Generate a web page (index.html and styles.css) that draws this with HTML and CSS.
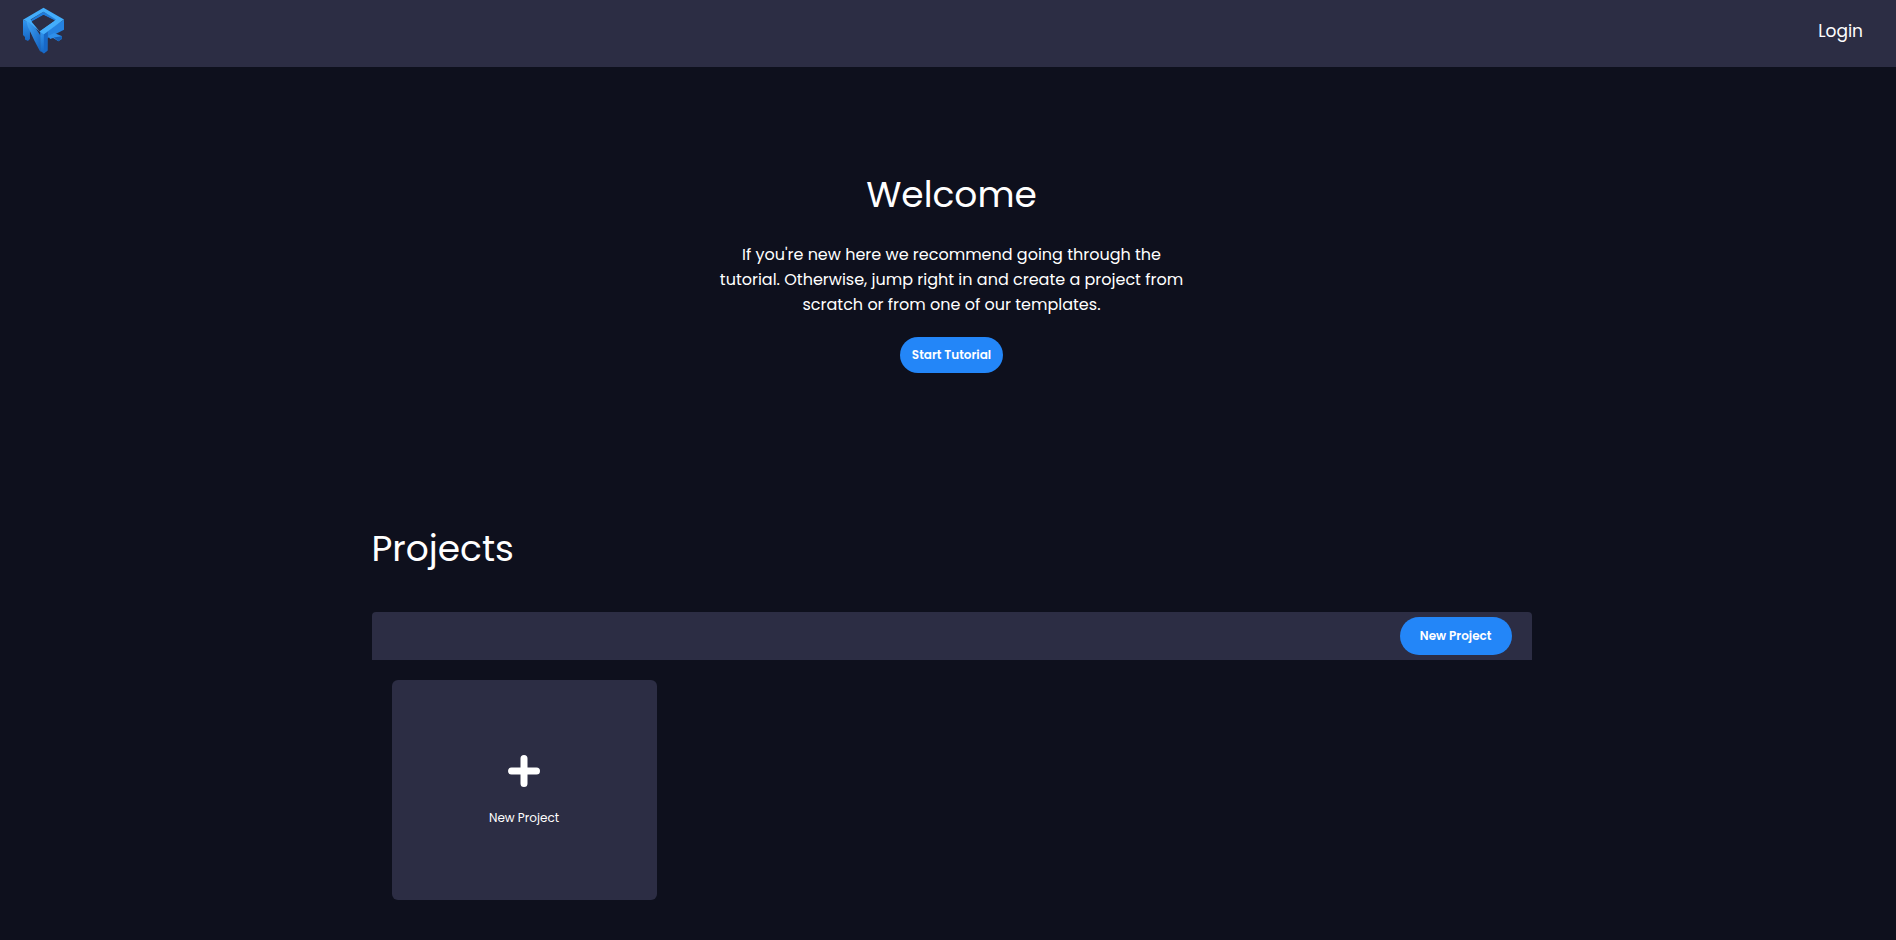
FILE: index.html
```html
<!DOCTYPE html>
<html lang="en">
<head>
<meta charset="utf-8">
<title>Projects</title>
<link rel="stylesheet" href="styles.css">
</head>
<body>
<header class="header">
  <a class="logo" href="#" aria-label="Home">
    <svg viewBox="66 22 130 144" width="43" height="48" aria-hidden="true">
      <defs>
        <linearGradient id="leg" x1="0" y1="0" x2="0" y2="1">
          <stop offset="0" stop-color="#3196f0"/>
          <stop offset="1" stop-color="#1666c4"/>
        </linearGradient>
        <linearGradient id="brace" x1="0" y1="0" x2="1" y2="1">
          <stop offset="0" stop-color="#43a9fa"/>
          <stop offset="1" stop-color="#125fbd"/>
        </linearGradient>
      </defs>
      <path fill="url(#leg)" d="M69 60L90 70V118L84 124L75 120V112L69 106Z"/>
      <path fill="#2c2d44" d="M91 98L108 134L91 126Z"/>
      <path fill="url(#brace)" d="M78 60L94 64L122 108V158L104 124L84 82Z"/>
      <path fill="#1f7bdb" d="M131 36L168 58V64L131 46L94 66V59Z"/>
      <path fill="#2582e0" d="M193 60V90L178 98L143 116V92Z"/>
      <path fill="#2e8fea" d="M145 109L163 100L186 109V118L176 125L160 115L151 118Z"/>
      <path fill="#145fb8" d="M162 114L186 110V118L176 125Z"/>
      <path fill="url(#leg)" d="M121 96L143 94V153L132 162L121 154Z"/>
      <path fill="#1768c8" d="M132 102L143 96V153L132 162Z"/>
      <path fill="#43adfb" fill-rule="evenodd" d="M131 24L193 59L132 104L120 96L88 68L69 60ZM131 36L92 59L120 93L168 59Z"/>
      <path fill="#2c2d44" d="M131 46L95 66L119 95L165 62Z"/>
    </svg>
  </a>
  <a class="login" href="#">Login</a>
</header>
<main class="page">
  <section class="welcome">
    <h1 class="title">Welcome</h1>
    <p class="intro">If you're new here we recommend going through the<br>tutorial. Otherwise, jump right in and create a project from<br>scratch or from one of our templates.</p>
    <button class="button button-tutorial" type="button">Start Tutorial</button>
  </section>
  <section class="projects">
    <h2 class="title">Projects</h2>
    <div class="toolbar">
      <button class="button button-new" type="button">New Project</button>
    </div>
    <div class="grid">
      <button class="card" type="button">
        <svg viewBox="0 0 32 32" width="32" height="32" aria-hidden="true">
          <path d="M16 3.5V28.5M3.5 16H28.5" stroke="#fff" stroke-width="7" stroke-linecap="round"/>
        </svg>
        <span>New Project</span>
      </button>
    </div>
  </section>
</main>
</body>
</html>
```
FILE: styles.css
```css
* { box-sizing: border-box; }

body {
  margin: 0;
  min-height: 100vh;
  background: #0e101d;
  color: #fff;
  font-family: Poppins, Inter, sans-serif;
  font-size: 16px;
}

.header {
  display: flex;
  align-items: flex-start;
  justify-content: space-between;
  height: 67px;
  padding: 7px 33px 0 22px;
  background: #2c2d44;
}

.logo { display: block; }
.logo svg { display: block; }

.login {
  color: #fff;
  font-size: 17px;
  line-height: 48px;
  text-decoration: none;
}

.page { padding-left: 7px; }

.welcome {
  display: flex;
  flex-direction: column;
  align-items: center;
  padding-top: 101px;
  text-align: center;
}

.title {
  margin: 0;
  font-size: 36px;
  font-weight: 400;
  line-height: 54px;
}

.intro {
  margin: 20px 0;
  line-height: 25px;
}

.button {
  border: 0;
  border-radius: 20px;
  background: #2386f8;
  color: #fff;
  font-family: inherit;
  font-size: 12px;
  font-weight: 600;
}

.button-tutorial { height: 36px; padding: 0 12px; }
.button-new { height: 38px; padding: 0 20px; }

.projects {
  max-width: 1160px;
  margin: 149px auto 0;
}

.toolbar {
  display: flex;
  align-items: center;
  justify-content: flex-end;
  height: 48px;
  margin-top: 36px;
  padding: 0 20px;
  border-radius: 4px 4px 0 0;
  background: #2c2d44;
}

.grid {
  display: grid;
  grid-template-columns: repeat(4, 1fr);
  gap: 20px;
  padding: 20px;
}

.card {
  display: flex;
  flex-direction: column;
  align-items: center;
  justify-content: center;
  gap: 20px;
  height: 220px;
  padding: 4px 0 0;
  border: 0;
  border-radius: 6px;
  background: #2c2d44;
  color: #fff;
  font-family: inherit;
  font-size: 12px;
  line-height: 22px;
}
```
